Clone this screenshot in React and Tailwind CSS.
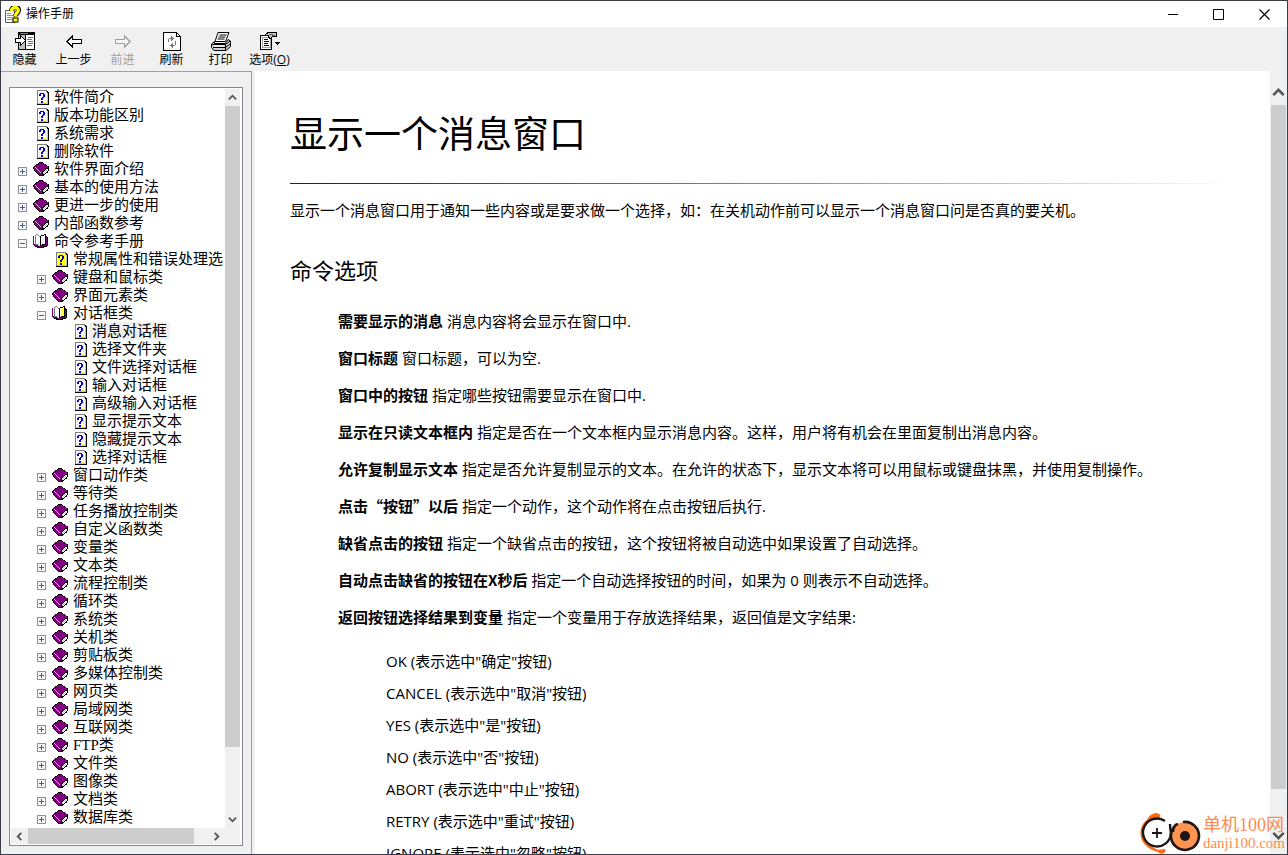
import React, { useState } from "react";

const TREE = [
  { label: "软件简介", level: 0, kind: "page" },
  { label: "版本功能区别", level: 0, kind: "page" },
  { label: "系统需求", level: 0, kind: "page" },
  { label: "删除软件", level: 0, kind: "page" },
  { label: "软件界面介绍", level: 0, kind: "book" },
  { label: "基本的使用方法", level: 0, kind: "book" },
  { label: "更进一步的使用", level: 0, kind: "book" },
  { label: "内部函数参考", level: 0, kind: "book" },
  { label: "命令参考手册", level: 0, kind: "open" },
  { label: "常规属性和错误处理选", level: 1, kind: "newpage" },
  { label: "键盘和鼠标类", level: 1, kind: "book" },
  { label: "界面元素类", level: 1, kind: "book" },
  { label: "对话框类", level: 1, kind: "open" },
  { label: "消息对话框", level: 2, kind: "page" },
  { label: "选择文件夹", level: 2, kind: "page" },
  { label: "文件选择对话框", level: 2, kind: "page" },
  { label: "输入对话框", level: 2, kind: "page" },
  { label: "高级输入对话框", level: 2, kind: "page" },
  { label: "显示提示文本", level: 2, kind: "page" },
  { label: "隐藏提示文本", level: 2, kind: "page" },
  { label: "选择对话框", level: 2, kind: "page" },
  { label: "窗口动作类", level: 1, kind: "book" },
  { label: "等待类", level: 1, kind: "book" },
  { label: "任务播放控制类", level: 1, kind: "book" },
  { label: "自定义函数类", level: 1, kind: "book" },
  { label: "变量类", level: 1, kind: "book" },
  { label: "文本类", level: 1, kind: "book" },
  { label: "流程控制类", level: 1, kind: "book" },
  { label: "循环类", level: 1, kind: "book" },
  { label: "系统类", level: 1, kind: "book" },
  { label: "关机类", level: 1, kind: "book" },
  { label: "剪贴板类", level: 1, kind: "book" },
  { label: "多媒体控制类", level: 1, kind: "book" },
  { label: "网页类", level: 1, kind: "book" },
  { label: "局域网类", level: 1, kind: "book" },
  { label: "互联网类", level: 1, kind: "book" },
  { label: "FTP类", level: 1, kind: "book" },
  { label: "文件类", level: 1, kind: "book" },
  { label: "图像类", level: 1, kind: "book" },
  { label: "文档类", level: 1, kind: "book" },
  { label: "数据库类", level: 1, kind: "book" },
];

const OPTIONS = [
  ["需要显示的消息", "消息内容将会显示在窗口中."],
  ["窗口标题", "窗口标题，可以为空."],
  ["窗口中的按钮", "指定哪些按钮需要显示在窗口中."],
  ["显示在只读文本框内", "指定是否在一个文本框内显示消息内容。这样，用户将有机会在里面复制出消息内容。"],
  ["允许复制显示文本", "指定是否允许复制显示的文本。在允许的状态下，显示文本将可以用鼠标或键盘抹黑，并使用复制操作。"],
  ["点击“按钮”以后", "指定一个动作，这个动作将在点击按钮后执行."],
  ["缺省点击的按钮", "指定一个缺省点击的按钮，这个按钮将被自动选中如果设置了自动选择。"],
  ["自动点击缺省的按钮在X秒后", "指定一个自动选择按钮的时间，如果为 0 则表示不自动选择。"],
  ["返回按钮选择结果到变量", "指定一个变量用于存放选择结果，返回值是文字结果:"],
];

const RESULTS = [
  'OK (表示选中"确定"按钮)',
  'CANCEL (表示选中"取消"按钮)',
  'YES (表示选中"是"按钮)',
  'NO (表示选中"否"按钮)',
  'ABORT (表示选中"中止"按钮)',
  'RETRY (表示选中"重试"按钮)',
  'IGNORE (表示选中"忽略"按钮)',
];

const COLORS = { k: "#000", g: "#808080", s: "#c0c0c0", w: "#fff", y: "#ffff00", b: "#0000e0", p: "#800080" };

const PAGE = [
  "gggggggggg..",
  "gwwwwwwwwgk.",
  "gwywywywywkk",
  "gwwbbbbwwwsk",
  "gwbbwwbbwwsk",
  "gwbbwwbbywsk",
  "gwywwwbbwwsk",
  "gwwwwbbwywsk",
  "gwywbbwwwwsk",
  "gwwwbbwwywsk",
  "gwywwwwwwwsk",
  "gwwwbbwwywsk",
  "gwywbbwywwsk",
  "gssssssssssk",
  "kkkkkkkkkkkk",
];

// same page on a yellow dithered sheet
const NEW_PAGE = PAGE.map((row, y) =>
  [...row].map((c, x) => (c === "w" && (x + y) % 2 === 0 ? "y" : c)).join("")
);

const BOOK = [
  "......kkkk......",
  ".....kppppk.....",
  "...kkpppppppk...",
  "..kppppppppppk..",
  ".kpppppppppppppk",
  "kpsppppppppppppk",
  "kppspppppppppkkk",
  ".kppspppppppkwwk",
  ".kpppspppppkwswk",
  "..kpppsppkkwswk.",
  "...kpppspkwswkk.",
  "....kppppkswk...",
  ".....kpppkkk....",
  "......kkkkk.....",
];

const OPEN_BOOK = [
  "...gg......kk..",
  "..gwwg..kkkwk..",
  "p.gwwwgkwwywkk.",
  "p.gwwwwkwywwkpk",
  "p.gwwwwkwwywkpk",
  "p.gwwwwkwywwkpk",
  "p.gwwwwkwwywkpk",
  "p.gwwwwkwywwkpk",
  "p.gwwwwkwwywkpk",
  "p.gwwwwkwywwkpk",
  "ppgggwwkwkkkkpk",
  ".kpppgwkkpppppk",
  "..kkkpppppkkkk.",
  "....kkkkkkk....",
];

const KINDS = { page: PAGE, newpage: NEW_PAGE, book: BOOK, open: OPEN_BOOK };

const PixelArt = ({ rows }) => (
  <svg width={rows[0].length} height={rows.length} shapeRendering="crispEdges" aria-hidden="true">
    {rows.map((row, y) =>
      [...row].map((c, x) =>
        c === "." ? null : <rect key={`${x}-${y}`} x={x} y={y} width="1" height="1" fill={COLORS[c]} />
      )
    )}
  </svg>
);

const Chevron = ({ dir, big }) => {
  const paths = {
    up: "M1 7 L5 3 L9 7",
    down: "M1 3 L5 7 L9 3",
    left: "M7 1 L3 5 L7 9",
    right: "M3 1 L7 5 L3 9",
  };
  const size = big ? 13 : 9;
  return (
    <svg width={size} height={size} viewBox="0 0 10 10" aria-hidden="true">
      <path d={paths[dir]} fill="none" stroke="#555" strokeWidth="2" />
    </svg>
  );
};

const AppIcon = () => (
  <svg width="16" height="17" viewBox="0 0 16 17" aria-hidden="true">
    <path d="M0.5 4.5 H9.5 V16.5 H0.5 Z" fill="#fff" stroke="#606060" />
    <path d="M2 7.5 H6 M2 9.5 H8 M2 11.5 H7 M2 13.5 H8" stroke="#909090" />
    <path d="M6.5 5 C6.5 0 14 0 13.5 4.5 C13.3 7 10.5 7 10.5 10.5" fill="none" stroke="#000" strokeWidth="5" />
    <path d="M6.5 5.5 C6.5 0.5 13.5 0.5 13.3 4.5 C13 7 10.2 7 10.2 10.5" fill="none" stroke="#ffff00" strokeWidth="3.4" />
    <rect x="8" y="12" width="5" height="4" fill="#ffff00" stroke="#000" />
  </svg>
);

const HideIcon = () => (
  <svg width="20" height="18" viewBox="0 0 20 18" shapeRendering="crispEdges" aria-hidden="true">
    <path d="M3.5 0.5 H19.5 V17.5 H3.5 Z" fill="#fff" stroke="#000" />
    <path d="M3 1.5 H20" stroke="#000" strokeWidth="3" />
    <path d="M5 1.5 H13" stroke="#808080" />
    <path d="M4 3 H10 V17 H4 Z" fill="#c0c0c0" />
    <path d="M10.5 3 V17" stroke="#000" />
    <path d="M13 5.5 H18 M12 7.5 H17 M13 9.5 H18 M13 11.5 H18 M12 13.5 H17" stroke="#707070" />
    <path d="M0.5 6.5 H5.5 V3.5 L10.5 8.5 L5.5 13.5 V10.5 H0.5 Z" fill="#fff" stroke="#000" />
  </svg>
);

const ArrowIcon = ({ forward }) => (
  <svg width="16" height="18" viewBox="0 0 16 18" shapeRendering="crispEdges" aria-hidden="true">
    {forward ? (
      <path d="M15 9.5 L9.5 4 V7.5 H0.5 V11.5 H9.5 V15 Z" fill="#f5f5f5" stroke="#a0a0a0" />
    ) : (
      <path d="M1 9.5 L6.5 4 V7.5 H15.5 V11.5 H6.5 V15 Z" fill="#fff" stroke="#000" />
    )}
  </svg>
);

const RefreshIcon = () => (
  <svg width="18" height="19" viewBox="0 0 18 19" shapeRendering="crispEdges" aria-hidden="true">
    <path d="M0.5 0.5 H13.5 L17.5 4.5 V18.5 H0.5 Z" fill="#fff" stroke="#000" />
    <path d="M13.5 0.5 V4.5 H17.5" fill="none" stroke="#000" />
    <path d="M5.5 10 V7.5 L6.5 6.5 H9" fill="none" stroke="#777" />
    <path d="M8 3.5 V9.5 L11 6.5 Z" fill="#777" />
    <path d="M12.5 9 V12.5 L11.5 13.5 H9" fill="none" stroke="#777" />
    <path d="M10 10.5 V16.5 L7 13.5 Z" fill="#777" />
  </svg>
);

const PrintIcon = () => (
  <svg width="20" height="19" viewBox="0 0 20 19" aria-hidden="true">
    <path d="M7 0.5 H18 L14.5 9.5 H4 Z" fill="#fff" stroke="#000" />
    <path d="M8.5 3 H15.5 M7.5 5 H14.5 M6.5 7 H13.5" stroke="#000" />
    <path d="M3.5 9.5 L0.5 12 V15.5 L3 18.5 H15 L19.5 14.5 V9 L17 7.5 L14.5 11.5 H3.5 Z" fill="#d0d0d0" stroke="#000" />
    <path d="M1 12.5 H14.5 L19 9 M2 15.5 H14.5 L19 12 M14.5 12.5 V18" fill="none" stroke="#000" />
    <path d="M3 14 H13" stroke="#fff" />
  </svg>
);

const OptionsIcon = () => (
  <svg width="20" height="18" viewBox="0 0 20 18" shapeRendering="crispEdges" aria-hidden="true">
    <path d="M0.5 3.5 H11.5 V17.5 H0.5 Z" fill="#fff" stroke="#000" />
    <path d="M2 5.5 H10 V15.5 H2.5 V5" fill="none" stroke="#a0a0a0" />
    <path d="M4 7.5 H8 M4 9.5 H9 M4 11.5 H8 M4 13.5 H9" stroke="#000" />
    <path d="M4.5 3.5 L8 0.5 H16.5 V4.5 H12.5 L10.5 6.5 L8.5 5.5 V3.5 Z" fill="#c0c0c0" stroke="#000" />
    <path d="M9 2.5 H13 M12 3.5 H15" stroke="#666" />
    <path d="M15 10 H20 L17.5 13 Z" fill="#000" />
  </svg>
);

const TOOLS = [
  { id: "hide", label: "隐藏", icon: <HideIcon /> },
  { id: "back", label: "上一步", icon: <ArrowIcon /> },
  { id: "forward", label: "前进", icon: <ArrowIcon forward />, disabled: true },
  { id: "refresh", label: "刷新", icon: <RefreshIcon /> },
  { id: "print", label: "打印", icon: <PrintIcon /> },
  { id: "options", label: <>选项(<u>O</u>)</>, icon: <OptionsIcon /> },
];

const TitleBar = () => (
  <header className="flex h-[26px] shrink-0 items-center bg-white pl-1">
    <AppIcon />
    <h1 className="flex-1 pl-[5px] text-xs">操作手册</h1>
    <button type="button" aria-label="最小化" className="flex h-full w-[46px] items-center justify-center">
      <svg width="10" height="11"><path d="M0 5.5 H10" stroke="#000" /></svg>
    </button>
    <button type="button" aria-label="最大化" className="flex h-full w-[45px] items-center justify-center">
      <svg width="11" height="11"><path d="M0.5 0.5 H10.5 V10.5 H0.5 Z" fill="none" stroke="#000" /></svg>
    </button>
    <button type="button" aria-label="关闭" className="flex h-full w-[46px] items-center justify-center">
      <svg width="11" height="11"><path d="M0.5 0.5 L10.5 10.5 M10.5 0.5 L0.5 10.5" stroke="#000" strokeWidth="1.2" /></svg>
    </button>
  </header>
);

const Toolbar = () => (
  <nav className="flex h-11 shrink-0 bg-[#f0f0f0]">
    {TOOLS.map((tool) => (
      <button
        key={tool.id}
        type="button"
        disabled={tool.disabled}
        className="flex w-[49px] flex-col items-center pt-1 pr-0.5 text-xs whitespace-nowrap disabled:text-[#a0a0a0]"
      >
        <span className="flex h-5 items-center">{tool.icon}</span>
        <span className="leading-[18px]">{tool.label}</span>
      </button>
    ))}
  </nav>
);

const TreeRow = ({ item, selected, onSelect }) => {
  const indent = ["pl-[7px]", "pl-[26px]", "pl-[45px]"][item.level];
  const folder = item.kind === "book" || item.kind === "open";
  return (
    <li className={`flex h-[18px] items-center ${indent}`}>
      <span className="flex w-[15px] shrink-0 pt-1">
        {folder && (
          <button type="button" aria-label={item.kind === "open" ? "折叠" : "展开"}>
            <svg width="9" height="9" shapeRendering="crispEdges" className="block">
              <rect x="0.5" y="0.5" width="8" height="8" fill="#f6f6f6" stroke="#919191" />
              <path d={item.kind === "open" ? "M2 4.5 H7" : "M2 4.5 H7 M4.5 2 V7"} stroke="#3c5a9c" />
            </svg>
          </button>
        )}
      </span>
      <span className={`flex w-4 shrink-0 ${folder ? "justify-start" : "justify-end"}`}>
        <PixelArt rows={KINDS[item.kind]} />
      </span>
      <button
        type="button"
        onClick={onSelect}
        className={`ml-0.5 h-[18px] px-[3px] whitespace-nowrap ${selected ? "bg-[#f0f0f0]" : ""}`}
      >
        {item.label}
      </button>
    </li>
  );
};

const Sidebar = () => {
  const [selected, setSelected] = useState("消息对话框");

  return (
    <aside className="flex w-[251px] shrink-0 flex-col border-t border-r border-[#a0a0a0] bg-[#f0f0f0] px-2 pt-[15px] pb-2">
      <div className="flex min-h-0 flex-1 flex-col border border-[#828790] bg-white px-px pb-px">
        <div className="flex min-h-0 flex-1">
          <ul className="min-w-0 flex-1 overflow-hidden font-['Liberation_Serif','Noto_Sans_CJK_SC',serif] text-[15px] leading-[18px]">
            {TREE.map((item) => (
              <TreeRow
                key={item.label}
                item={item}
                selected={selected === item.label}
                onSelect={() => setSelected(item.label)}
              />
            ))}
          </ul>
          {/* vertical scrollbar */}
          <div className="mt-px mr-px flex w-[15px] shrink-0 flex-col bg-[#f0f0f0]">
            <span className="flex h-[17px] items-center justify-center"><Chevron dir="up" /></span>
            <span className="flex-[10] bg-[#cdcdcd]" />
            <span className="flex-1" />
            <span className="flex h-[17px] items-center justify-center"><Chevron dir="down" /></span>
          </div>
        </div>
        {/* horizontal scrollbar */}
        <div className="mr-px flex h-4 shrink-0 bg-[#f0f0f0] pr-[15px]">
          <span className="flex w-[17px] items-center justify-center"><Chevron dir="left" /></span>
          <span className="flex-[12] bg-[#cdcdcd]" />
          <span className="flex-1" />
          <span className="flex w-[17px] items-center justify-center"><Chevron dir="right" /></span>
        </div>
      </div>
    </aside>
  );
};

const Article = () => (
  <article className="min-w-0 flex-1 overflow-hidden bg-white pt-9 pr-9 pl-[35px] text-[15px] leading-[22px]">
    <h2 className="text-[37px] leading-[54px]">显示一个消息窗口</h2>
    <div className="mt-[22px] h-px bg-linear-to-r from-[#222] to-white" />
    <p className="mt-[15px]">
      显示一个消息窗口用于通知一些内容或是要求做一个选择，如：在关机动作前可以显示一个消息窗口问是否真的要关机。
    </p>
    <h3 className="mt-[31px] text-[22px] leading-[36px]">命令选项</h3>
    <dl className="mt-[22px] flex flex-col gap-[15px] pl-12">
      {OPTIONS.map(([name, text]) => (
        <div key={name} className="whitespace-nowrap">
          <dt className="inline font-['Noto_Sans_CJK_SC',sans-serif] font-bold">{name}</dt>{" "}
          <dd className="inline">{text}</dd>
        </div>
      ))}
    </dl>
    <ul className="mt-[22px] flex flex-col gap-2.5 pl-24">
      {RESULTS.map((text) => (
        <li key={text}>{text}</li>
      ))}
    </ul>
  </article>
);

const Watermark = () => (
  <div className="absolute right-0.5 bottom-0 flex items-center gap-0.5 text-[#ff8b4d]">
    <svg width="62" height="42" viewBox="0 0 62 42" aria-hidden="true">
      <path d="M20 3 C8 5 1 12 1.500 22 C2 33 12 40 26 41 C18 37 6 34 5 22 C4 12 12 7 20 6 C23 5 21 1 17 1 C12 2 9 5 8 7" fill="#ff6a10" />
      <path d="M20 41 C24 43 28 40 26 37 L17 38 Z" fill="#ff6a10" />
      <path d="M26 9 A14 14 0 1 0 32 21 Q31 15 31 12" fill="none" stroke="#1c1618" strokeWidth="2.400" />
      <path d="M18 16 V26 M13 21 H23" stroke="#1c1618" strokeWidth="1.800" />
      <circle cx="46" cy="24" r="14" fill="#ff9350" />
      <path d="M44 10 A14 14 0 1 1 36 14 M34 20 Q34 13 39 12" fill="none" stroke="#1c1618" strokeWidth="2.600" />
      <circle cx="46" cy="24" r="5" fill="#1c1618" />
    </svg>
    <div className="font-['Liberation_Serif','Noto_Sans_CJK_SC',serif] whitespace-nowrap">
      <p className="text-[18px] leading-5">单机100网</p>
      <p className="text-[15px] leading-4">danji100.com</p>
    </div>
  </div>
);

export default function App() {
  return (
    <div className="relative flex h-screen flex-col overflow-hidden border border-[#3c3c46] bg-[#f0f0f0] font-['Open_Sans','Noto_Sans_CJK_SC',sans-serif] text-black">
      <TitleBar />
      <Toolbar />
      <main className="flex min-h-0 flex-1">
        <Sidebar />
        <div className="w-[3px] shrink-0 bg-[#f0f0f0]" />
        <Article />
        <div className="flex w-[17px] shrink-0 flex-col bg-[#f0f0f0] px-px pt-2">
          <span className="flex h-[26px] items-center justify-center"><Chevron dir="up" big /></span>
          <span className="flex-[25] bg-[#cdcdcd]" />
          <span className="flex-1" />
          <span className="flex h-[38px] items-center justify-center"><Chevron dir="down" big /></span>
        </div>
      </main>
      <Watermark />
    </div>
  );
}
